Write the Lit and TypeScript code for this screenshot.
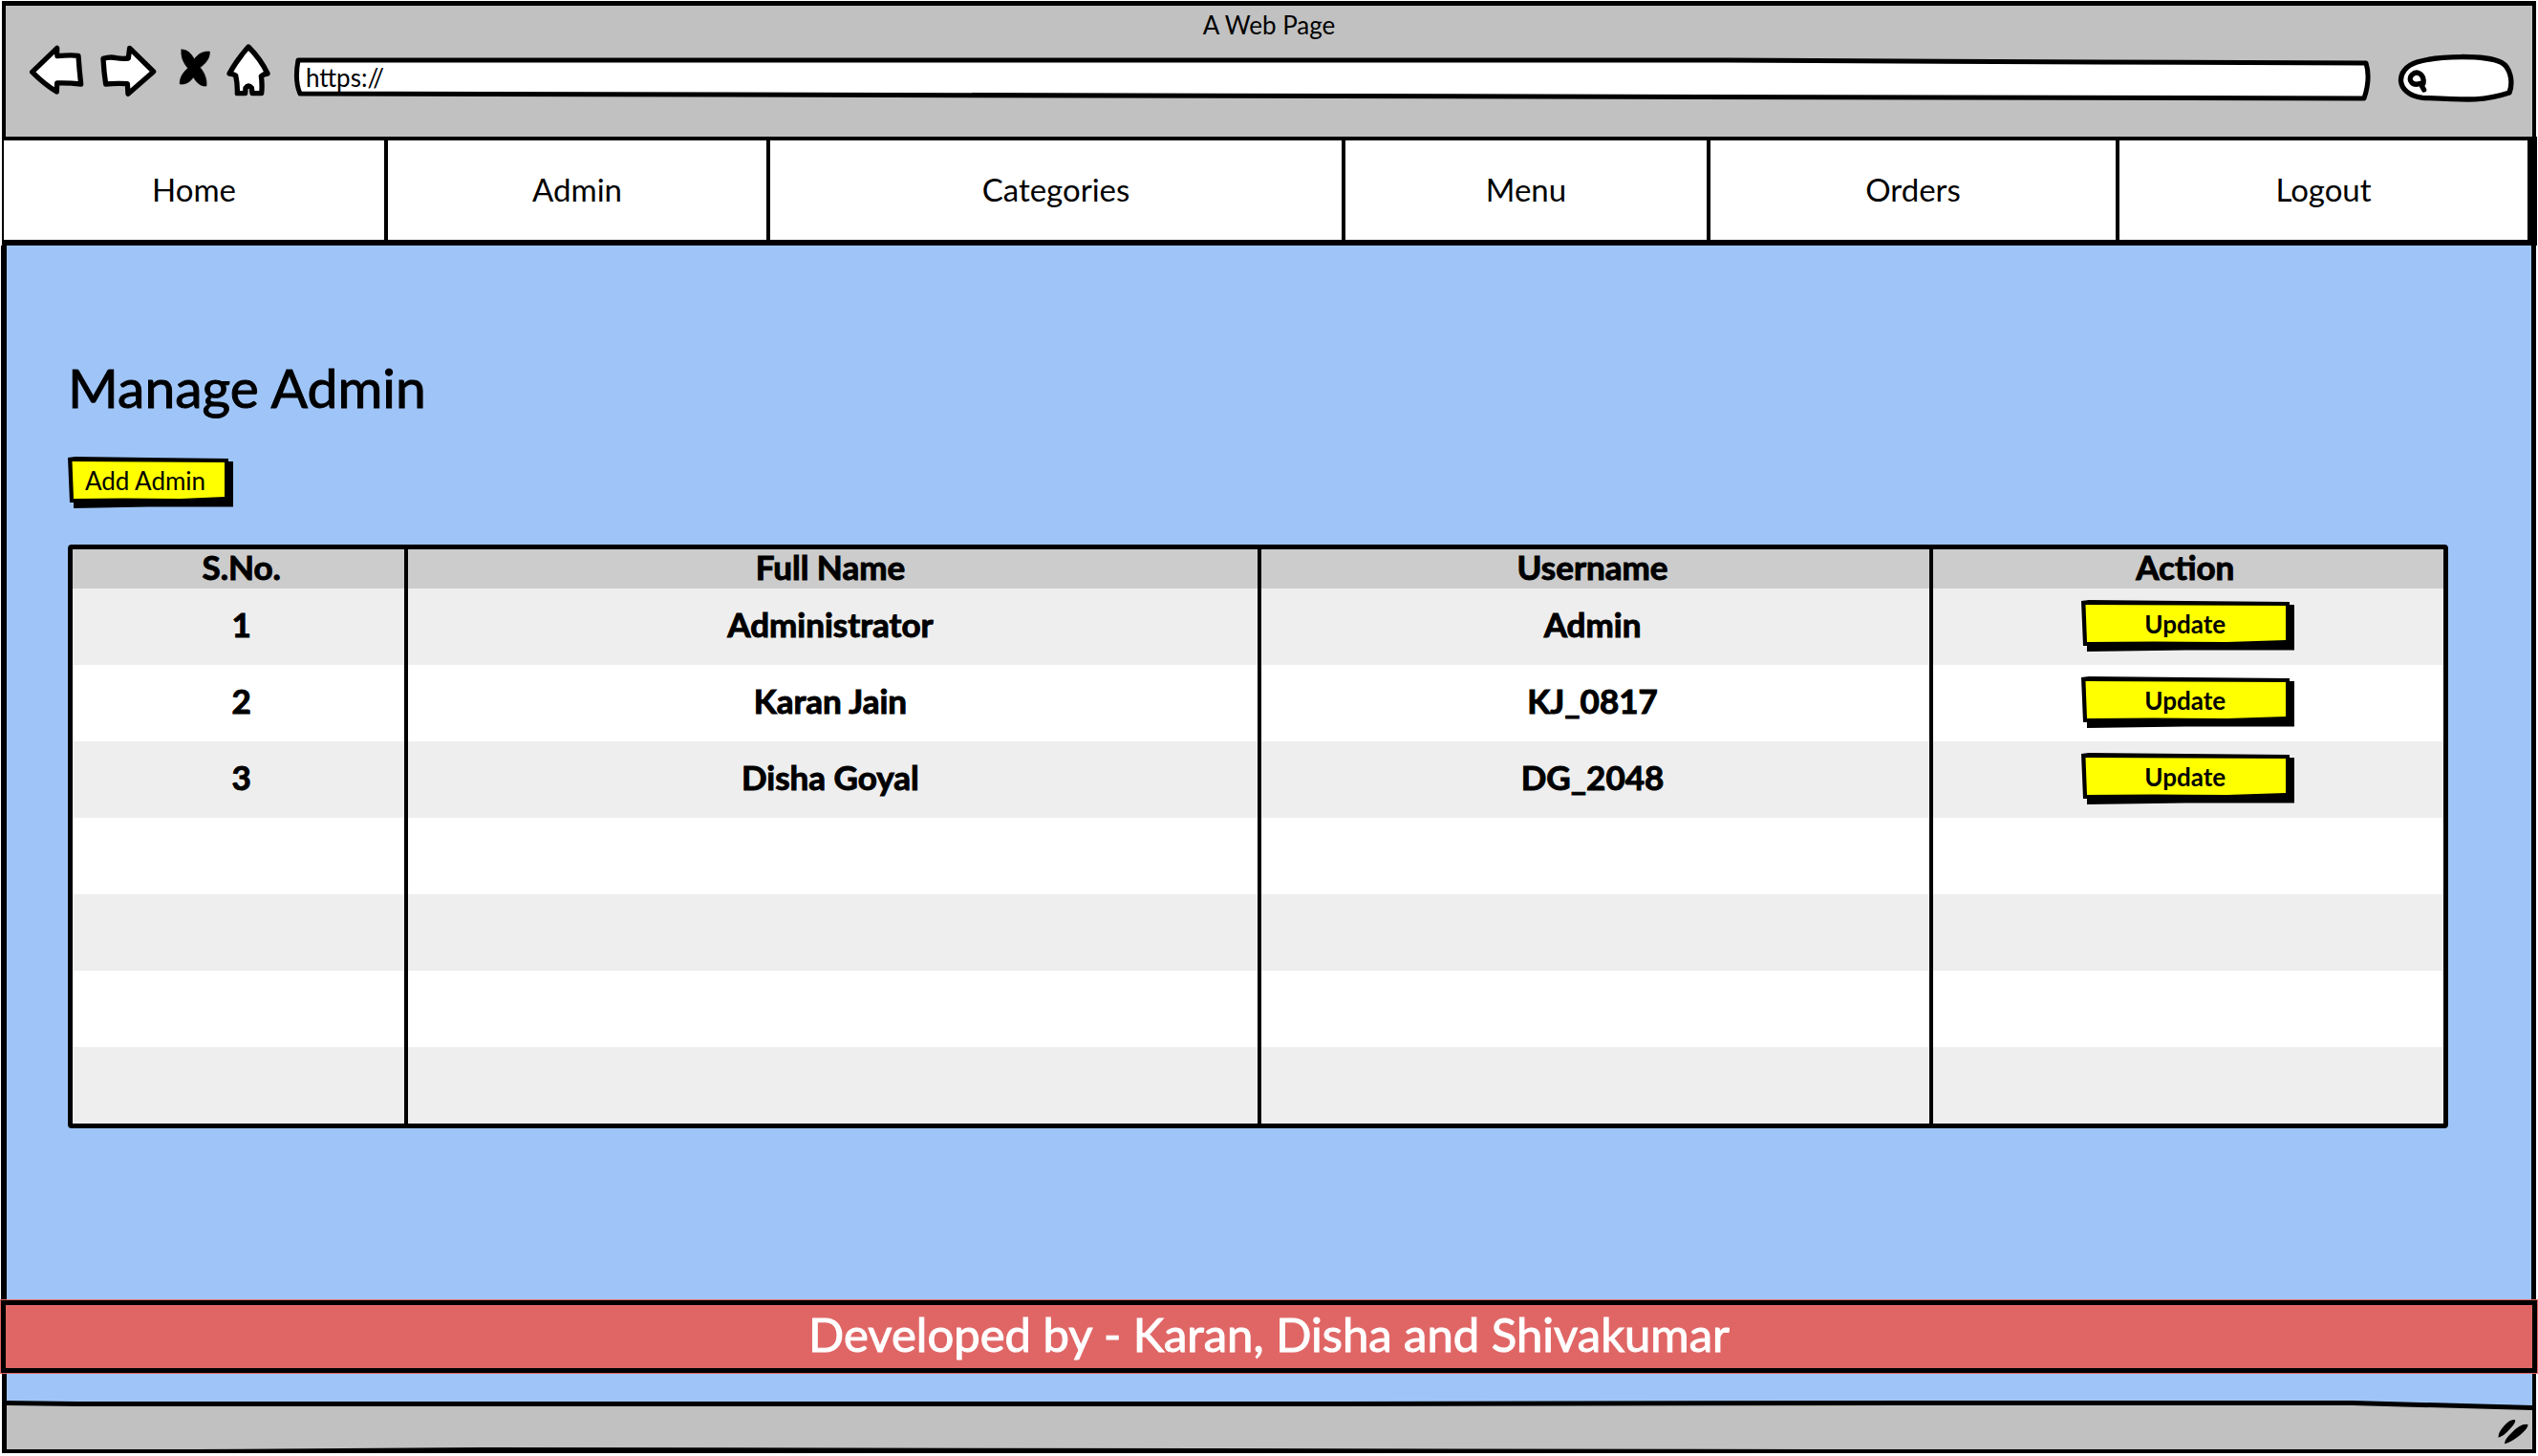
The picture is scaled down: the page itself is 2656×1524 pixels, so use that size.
import { LitElement, html, svg, css } from "lit";
import { customElement, property } from "lit/decorators.js";

const NAV = ["Home", "Admin", "Categories", "Menu", "Orders", "Logout"];

interface Admin {
  name: string;
  user: string;
}

const ADMINS: Admin[] = [
  { name: "Administrator", user: "Admin" },
  { name: "Karan Jain", user: "KJ_0817" },
  { name: "Disha Goyal", user: "DG_2048" },
];

const EMPTY_ROWS = [0, 1, 2, 3];

/** Yellow push button with an uneven ink frame and a hard shadow. */
@customElement("sketch-button")
class SketchButton extends LitElement {
  @property({ type: Boolean }) wide = false;

  static styles = css`
    :host {
      display: inline-block;
    }
    .btn {
      position: relative;
      display: block;
      width: 168px;
      height: 48px;
      margin: 0;
      padding: 0 6px 0 0;
      border: 0;
      background: none;
      color: #000;
      font: inherit;
      font-size: 26px;
      line-height: 48px;
      cursor: pointer;
      -webkit-text-stroke-width: 0;
    }
    .wide {
      width: 218px;
      padding: 0;
      font-weight: 700;
    }
    .frame {
      position: absolute;
      left: 0;
      top: 0;
      width: 100%;
      height: 100%;
      overflow: visible;
    }
    .label {
      position: relative;
    }
  `;

  render() {
    const w = this.wide ? 218 : 168;
    return html`<button class="btn ${this.wide ? "wide" : ""}" type="button">
      <svg class="frame" viewBox="0 0 ${w} 48" aria-hidden="true">
        ${svg`
          <path d="M6 40 V53 L${w * 0.5} 51.500 H${w + 5} V4 H${w - 10} Z" />
          <path d="M0 0 L8 -1 L${w * 0.5} 0 L${w} 1 V47 H2 Z" />
          <path fill="#ff0" d="M4.500 4 L${w - 4} 5 V41 L${w * 0.7} 43 L${w * 0.35} 42.500 L6 43 Z" />
        `}
      </svg>
      <span class="label"><slot></slot></span>
    </button>`;
  }
}

@customElement("app-root")
class AppRoot extends LitElement {
  static styles = css`
    :host {
      display: block;
      background: #fff;
      color: #000;
      font-family: Lato, "Open Sans", sans-serif;
    }
    * {
      box-sizing: border-box;
    }
    .window {
      display: flex;
      flex-direction: column;
      min-height: 100vh;
      padding: 1px 0 3px;
    }
    .chrome {
      margin: 0 2px;
      border: 5px solid #000;
      border-width: 5px 4px 0;
      background: #c1c1c1;
    }
    .title {
      font-size: 26px;
      line-height: 40px;
      text-align: center;
    }
    .toolbar {
      display: flex;
      gap: 24px;
      padding: 0 19px 37px 24px;
    }
    .controls {
      display: flex;
      gap: 16px;
    }
    .tool {
      display: block;
      padding: 0;
      border: 0;
      background: none;
      cursor: pointer;
    }
    .ink {
      display: block;
      height: 60px;
      overflow: visible;
      fill: #fff;
      stroke: #000;
      stroke-width: 16;
      stroke-linejoin: round;
      stroke-linecap: round;
    }
    .w58 { width: 58px; }
    .w60 { width: 60px; }
    .w42 { width: 42px; }
    .w46 { width: 46px; }
    .w127 { width: 127px; }
    .solid {
      fill: #000;
      stroke-width: 2;
    }
    .hollow {
      fill: none;
    }
    .field {
      position: relative;
      height: 60px;
    }
    .address {
      flex: 1;
    }
    .stretch {
      width: 100%;
      stroke-width: 5;
    }
    .input {
      position: absolute;
      inset: 17px 12px 7px 12px;
      padding: 0;
      border: 0;
      outline: 0;
      background: none;
      color: #000;
      font: inherit;
      font-size: 26px;
    }
    .query {
      left: 36px;
      width: 80px;
    }
    .nav {
      display: grid;
      grid-template-columns: 402fr 400fr 602fr 382fr 428fr 427fr;
      margin: 0 1px 0 2px;
      border: solid #000;
      border-width: 4px 10px 6px 2px;
      background: #fff;
    }
    .link {
      border-right: 4px solid #000;
      padding-bottom: 2px;
      color: #000;
      font-size: 33px;
      line-height: 102px;
      text-align: center;
      text-decoration: none;
    }
    .link:last-child {
      border-right: 0;
    }
    .main {
      flex: 1;
      margin: 0 2px 0 1px;
      padding: 116px 87px 170px 64px;
      border: solid #000;
      border-width: 0 5px 0 6px;
      background: #9fc5f8;
    }
    .heading {
      margin: 0 0 42px;
      font-size: 57px;
      font-weight: 400;
      line-height: 64px;
      -webkit-text-stroke: 1px currentColor;
    }
    .add {
      display: block;
      margin-bottom: 43px;
    }
    .grid {
      width: 100%;
      border: solid #000;
      border-width: 5px;
      border-radius: 4px;
      border-spacing: 0;
      table-layout: fixed;
      background: #fff;
      font-size: 35px;
      font-weight: 700;
      text-align: center;
      -webkit-text-stroke: 1px currentColor;
    }
    .c1 { width: 14%; }
    .c2 { width: 36%; }
    .c3 { width: 28.3%; }
    .c4 { width: 21.7%; }
    .head,
    .cell {
      height: 80px;
      padding: 0 6px 6px 0;
      border-left: 4px solid #000;
      line-height: 34px;
    }
    .head {
      height: 41px;
      background: #ccc;
    }
    .head:first-child,
    .cell:first-child {
      padding: 0 0 6px 6px;
      border-left: 0;
    }
    .row:nth-child(odd) {
      background: #eee;
    }
    .update {
      display: block;
      width: 218px;
      margin: 0 auto;
    }
    .credit {
      padding-bottom: 6px;
      border: solid #000;
      border-width: 6px;
      outline: 1px solid #e06666;
      outline-offset: -1px;
      background: #e06666;
      color: #fff;
      font-size: 49px;
      line-height: 60px;
      text-align: center;
      -webkit-text-stroke: 1px currentColor;
    }
    .strip {
      height: 28px;
      margin: 0 2px;
      border: solid #000;
      border-width: 0 4px 0 5px;
      background: #9fc5f8;
    }
    .status {
      position: relative;
      height: 55px;
      margin: 0 2px;
      background: #9fc5f8;
    }
    .bar {
      display: block;
      width: 100%;
      height: 55px;
    }
    .grip {
      position: absolute;
      right: 8px;
      bottom: 9px;
      width: 32px;
      height: 27px;
    }
  `;

  render() {
    return html`<div class="window">
      <header class="chrome">
        <div class="title">A Web Page</div>
        <div class="toolbar">
          <div class="controls">
            <button class="tool" type="button" aria-label="Back">
              <svg class="ink w58" viewBox="90 138 174 180">
                <path d="M101 226 L179 151 Q178 165 180 176 Q220 172 246 175 Q249 220 254 264 Q215 260 179 261 L178 288 Q140 265 101 226 Z" />
              </svg>
            </button>
            <button class="tool" type="button" aria-label="Forward">
              <svg class="ink w60" viewBox="312 138 180 180">
                <path d="M324 184 Q345 177 365 182 Q385 186 403 183 L407 151 L482 225 L402 295 L400 263 Q365 261 332 264 Q326 225 324 184 Z" />
              </svg>
            </button>
            <button class="tool" type="button" aria-label="Stop">
              <svg class="ink solid w42" viewBox="540 138 126 180">
                <path d="M570 156 C588 155 600 168 610 186 C622 168 638 161 658 162 C660 182 645 200 628 212 C642 228 650 248 648 270 C630 272 616 258 607 242 C598 256 584 266 565 264 C563 246 574 228 590 214 C576 198 567 178 570 156 Z" />
              </svg>
            </button>
            <button class="tool" type="button" aria-label="Home">
              <svg class="ink w46" viewBox="714 138 138 180">
                <path d="M780 147 Q818 185 840 231 Q828 232 820 239 Q824 267 821 293 L792 293 L790 276 Q780 264 771 276 L770 293 L745 293 Q746 263 740 237 Q731 232 720 231 Q742 190 780 147 Z" />
              </svg>
            </button>
          </div>
          <div class="field address">
            <svg class="ink stretch" viewBox="0 0 2172 60" preserveAspectRatio="none" aria-hidden="true">
              <path vector-effect="non-scaling-stroke" d="M4 17 L1500 17 L1890 19 L2168 20 Q2173 36 2166 57 L6 52 Q0 38 4 17 Z" />
            </svg>
            <input class="input" type="text" aria-label="Address" value="https://" />
          </div>
          <div class="field">
            <svg class="ink w127" viewBox="924 138 381 180" aria-hidden="true">
              <path d="M1018 307 C930 296 930 217 1000 195 C1070 174 1215 172 1265 196 C1295 212 1302 260 1290 291 C1210 318 1160 314 1018 307 Z" />
              <path class="hollow" d="M1012 262 C985 272 970 250 984 235 C1000 220 1024 232 1020 262 Z M1012 264 L1022 282" />
            </svg>
            <input class="input query" type="text" aria-label="Search" />
          </div>
        </div>
      </header>

      <nav class="nav">
        ${NAV.map((n) => html`<a class="link" href="#${n.toLowerCase()}">${n}</a>`)}
      </nav>

      <main class="main">
        <h1 class="heading">Manage Admin</h1>
        <sketch-button class="add">Add Admin</sketch-button>
        <table class="grid">
          <colgroup>
            <col class="c1" /><col class="c2" /><col class="c3" /><col class="c4" />
          </colgroup>
          <thead>
            <tr>
              <th class="head">S.No.</th>
              <th class="head">Full Name</th>
              <th class="head">Username</th>
              <th class="head">Action</th>
            </tr>
          </thead>
          <tbody>
            ${ADMINS.map(
              (a, i) => html`<tr class="row">
                <td class="cell">${i + 1}</td>
                <td class="cell">${a.name}</td>
                <td class="cell">${a.user}</td>
                <td class="cell"><sketch-button class="update" wide>Update</sketch-button></td>
              </tr>`
            )}
            ${EMPTY_ROWS.map(
              () => html`<tr class="row">
                <td class="cell"></td>
                <td class="cell"></td>
                <td class="cell"></td>
                <td class="cell"></td>
              </tr>`
            )}
          </tbody>
        </table>
      </main>

      <footer class="credit">Developed by - Karan, Disha and Shivakumar</footer>
      <div class="strip"></div>
      <div class="status">
        <svg class="bar" viewBox="0 0 2652 55" preserveAspectRatio="none" aria-hidden="true">
          <path d="M0 0 L80 1 L1400 1 L2000 0 L2460 0 L2648 5 V0 H2652 V55 H0 Z" />
          <path fill="#c1c1c1" d="M5 5 L80 6 L1400 6 L2000 5 L2460 5 L2648 10 V51 L1900 51 L500 49 L200 51 H5 Z" />
        </svg>
        <svg class="grip" viewBox="1070 466 96 81" aria-hidden="true">
          <path d="M1072 525 Q1069 512 1090 488 Q1111 465 1124 470 Q1128 478 1107 499 Q1088 521 1072 525 Z M1092 545 Q1088 534 1113 510 Q1143 479 1164 484 Q1168 493 1140 517 Q1112 540 1092 545 Z" />
        </svg>
      </div>
    </div>`;
  }
}
